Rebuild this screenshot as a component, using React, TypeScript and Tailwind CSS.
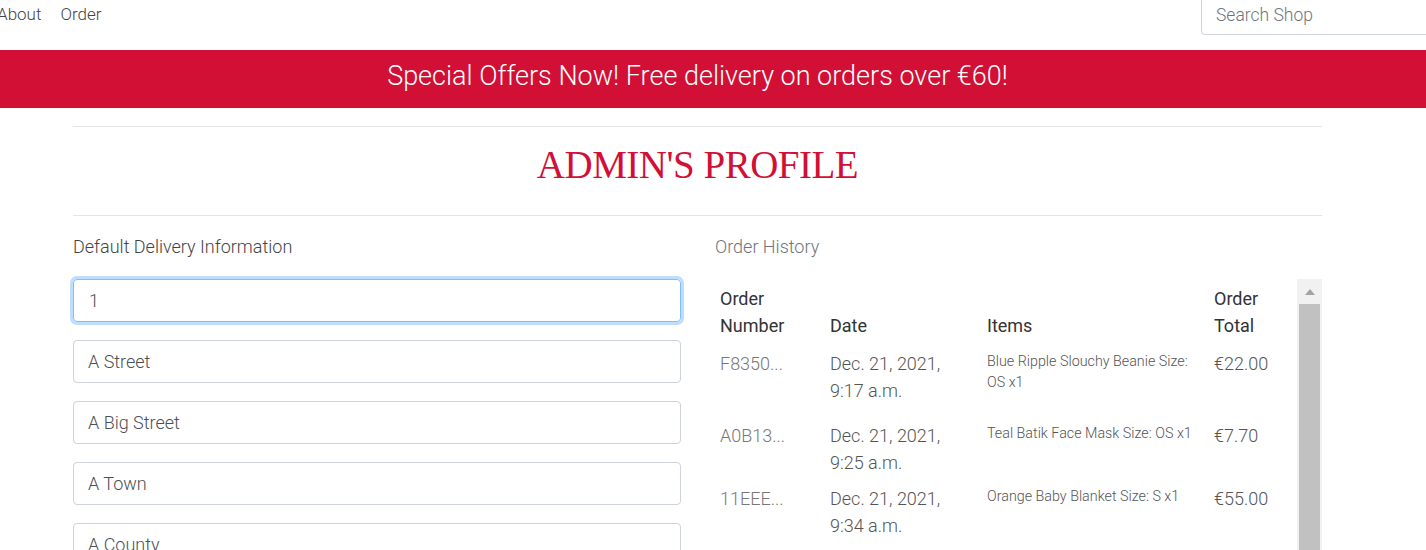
const orders = [
  {
    number: "F8350...",
    date: ["Dec. 21, 2021,", "9:17 a.m."],
    items: "Blue Ripple Slouchy Beanie Size: OS x1",
    total: "€22.00",
    h: "h-[72px]",
  },
  {
    number: "A0B13...",
    date: ["Dec. 21, 2021,", "9:25 a.m."],
    items: "Teal Batik Face Mask Size: OS x1",
    total: "€7.70",
    h: "h-[63px]",
  },
  {
    number: "11EEE...",
    date: ["Dec. 21, 2021,", "9:34 a.m."],
    items: "Orange Baby Blanket Size: S x1",
    total: "€55.00",
    h: "h-[63px]",
  },
];

const fields = ["A Street", "A Big Street", "A Town", "A County"];

export default function App() {
  return (
    <div className="w-full h-[550px] overflow-hidden bg-white font-['Roboto','Liberation_Sans',sans-serif] font-light text-[#333]">
      {/* top nav */}
      <div className="flex items-start justify-between h-[50px]">
        <nav className="flex gap-[19px] ml-[-3px] pt-[1px] text-[17px] leading-[26px] text-[#444]">
          <span>About</span>
          <span>Order</span>
        </nav>
        <div className="mt-[-4px] mr-[-40px] w-[265px] h-[39px] border border-[#ced4da] rounded-[4px] px-[14px] flex items-center text-[17.5px] text-[#6c757d]">
          Search Shop
        </div>
      </div>

      {/* banner */}
      <div className="h-[58px] bg-[#d20f35] flex items-center justify-center pr-[31px] pb-[6px] text-white text-[27px] font-light">
        Special Offers Now! Free delivery on orders over €60!
      </div>

      <div className="mx-[73px] w-[1249px]">
        <hr className="mt-[18px] border-t border-[#e5e5e5]" />
        <h1 className="h-[88px] pb-[12px] flex items-center justify-center font-['Liberation_Serif',serif] font-normal text-[39px] tracking-[-0.5px] text-[#d20f35] uppercase">
          Admin's Profile
        </h1>
        <hr className="border-t border-[#e5e5e5]" />

        <div className="flex gap-[34px] pt-[19px]">
          {/* delivery info */}
          <div className="w-[608px]">
            <p className="text-[18px] leading-[24px] text-[#444]">Default Delivery Information</p>
            <div className="mt-[20px] flex flex-col gap-[18px]">
              <div className="h-[43px] rounded-[4px] border border-[#80bdff] shadow-[0_0_0_3px_rgba(0,123,255,0.25)] px-[15px] flex items-center text-[18px] text-[#495057]">
                1
              </div>
              {fields.map((f) => (
                <div
                  key={f}
                  className="h-[43px] rounded-[4px] border border-[#ced4da] px-[14px] flex items-center text-[18px] text-[#495057]"
                >
                  {f}
                </div>
              ))}
            </div>
          </div>

          {/* order history */}
          <div className="flex-1">
            <p className="text-[18px] leading-[24px] text-[#6c757d]">Order History</p>
            <div className="mt-[20px] flex h-[300px]">
              <div className="flex-1">
                <div className="flex items-end h-[65px] pt-[5px] text-[18px] leading-[27px] text-[#333] font-normal">
                  <div className="w-[110px] pl-[5px] pb-[5px]">Order<br />Number</div>
                  <div className="w-[157px] pl-[5px] pb-[5px]">Date</div>
                  <div className="w-[227px] pl-[5px] pb-[5px]">Items</div>
                  <div className="flex-1 pl-[5px] pb-[5px]">Order<br />Total</div>
                </div>
                {orders.map((o) => (
                  <div key={o.number} className={`flex items-start pt-[6px] ${o.h}`}>
                    <div className="w-[110px] pl-[5px] text-[18px] leading-[27px] text-[#777]">{o.number}</div>
                    <div className="w-[157px] pl-[5px] text-[18px] leading-[27px] text-[#555]">
                      {o.date[0]}
                      <br />
                      {o.date[1]}
                    </div>
                    <div className="w-[227px] pl-[5px] pr-[6px] text-[14.3px] leading-[21px] text-[#555] pt-[1px]">{o.items}</div>
                    <div className="flex-1 pl-[5px] text-[18px] leading-[27px] text-[#555]">{o.total}</div>
                  </div>
                ))}
              </div>
              {/* scrollbar */}
              <div className="w-[25px] bg-[#f1f1f1] flex flex-col">
                <div className="h-[25px] flex items-center justify-center">
                  <svg width="10" height="6" viewBox="0 0 10 6">
                    <path d="M5 0 L10 6 L0 6 Z" fill="#a3a3a3" />
                  </svg>
                </div>
                <div className="flex-1 mx-[2px] bg-[#c1c1c1]" />
              </div>
            </div>
          </div>
        </div>
      </div>
    </div>
  );
}
